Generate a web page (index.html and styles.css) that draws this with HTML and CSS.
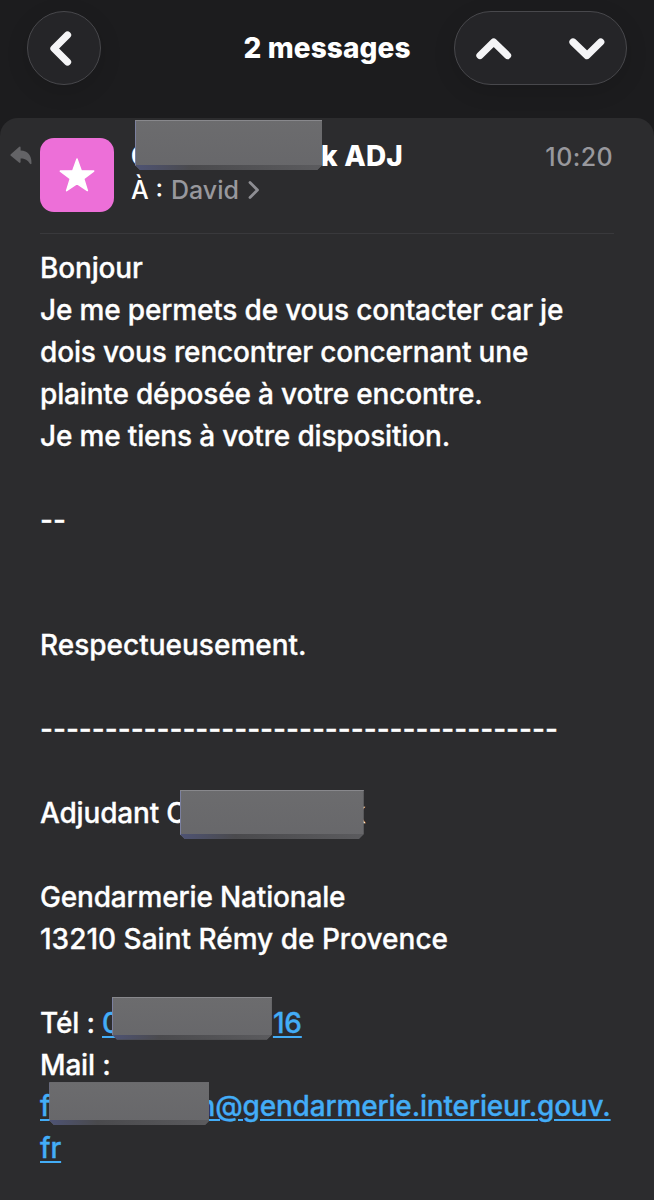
FILE: index.html
```html
<!DOCTYPE html>
<html lang="fr">
<head>
    <meta charset="UTF-8">
    <meta name="viewport" content="width=device-width, initial-scale=1.0">
    <title>2 messages</title>
    <link rel="stylesheet" href="styles.css">
</head>
<body>
    <header class="topbar">
        <button class="glass back" aria-label="Retour">
            <svg width="72" height="72" viewBox="0 0 72 72"><path d="M39.5 23 L26 36.5 L39.5 50"/></svg>
        </button>
        <h1 class="title">2 messages</h1>
        <div class="glass pager">
            <svg width="171" height="72" viewBox="0 0 171 72"><path d="M25 43.5 L38.7 30 L52.5 43.5 M118 30 L132 43.5 L145.7 30"/></svg>
        </div>
    </header>

    <main class="mail">
        <div class="sender">
            <svg class="reply" width="22" height="20" viewBox="0 0 22 20"><path d="M0.8 8.2 L9 0.9 Q10.6 -0.1 10.6 1.8 V4.6 C18 4.8 21.6 9.5 21.5 17.2 Q21.3 18.9 20 17.7 C17.6 13.8 15 12.4 10.6 12.4 V15.8 Q10.5 17.6 9 16.6 L0.8 9.8 Q0 9 0.8 8.2Z"/></svg>
            <div class="avatar">
                <svg width="38" height="36" viewBox="0 0 38 36"><path d="M19 2 L23.2 13.8 L35.7 14.1 L25.7 21.7 L29.4 33.6 L19 26.6 L8.6 33.6 L12.3 21.7 L2.3 14.1 L14.8 13.8Z"/></svg>
            </div>
            <div class="names">
                <div class="from">C<span class="mask mask-from"></span>k ADJ</div>
                <div class="to"><span class="to-label">À :</span> <span class="to-name">David</span>
                    <svg width="12" height="20" viewBox="0 0 12 20"><path d="M2 2.5 L9.5 10 L2 17.5"/></svg>
                </div>
            </div>
            <time class="time">10:20</time>
        </div>

        <div class="body">
            <p>Bonjour</p>
            <p>Je me permets de vous contacter car je</p>
            <p>dois vous rencontrer concernant une</p>
            <p>plainte déposée à votre encontre.</p>
            <p>Je me tiens à votre disposition.</p>
            <br>
            <p class="wide">--</p>
            <br>
            <br>
            <p class="wide">Respectueusement.</p>
            <br>
            <p class="wide">----------------------------------------</p>
            <br>
            <p>Adjudant C<span class="mask mask-name"></span>k</p>
            <br>
            <p>Gendarmerie Nationale</p>
            <p class="wide">13210 Saint Rémy de Provence</p>
            <br>
            <p>Tél : <a class="link">0<span class="mask mask-tel"></span>16</a></p>
            <p>Mail :</p>
            <p><a class="link">f<span class="mask mask-mail"></span>n@gendarmerie.interieur.gouv.</a></p>
            <p><a class="link">fr</a></p>
        </div>
    </main>
</body>
</html>
```
FILE: styles.css
```css
* {
    box-sizing: border-box;
}
body {
    margin: 0;
    height: 1200px;
    overflow: hidden;
    background: #1c1c1e;
    color: #fff;
    font-family: Inter, "Liberation Sans", sans-serif;
    display: flex;
    flex-direction: column;
}
h1, p {
    margin: 0;
}
.topbar {
    height: 118px;
    flex: none;
    display: flex;
    justify-content: space-between;
    padding: 11px 27px 0;
}
.glass {
    height: 74px;
    border: 1px solid #48484c;
    border-radius: 37px;
    background: #252528;
    box-shadow: 0 6px 22px rgba(0, 0, 0, 0.13);
    padding: 0;
}
.glass svg {
    display: block;
    fill: none;
    stroke: #f4f4f6;
    stroke-width: 7.3;
    stroke-linecap: round;
    stroke-linejoin: round;
}
.back {
    width: 74px;
}
.pager {
    width: 173px;
}
.title {
    font-size: 28px;
    font-weight: 800;
    line-height: 75px;
    letter-spacing: 0.1px;
    margin-left: 102px;
    width: 170px;
    white-space: nowrap;
}
.mail {
    flex: 1;
    background: #2c2c2e;
    border-radius: 18px 18px 0 0;
    padding: 0 40px;
}
.sender {
    height: 116px;
    display: flex;
    border-bottom: 1px solid #39393c;
    padding-top: 20px;
}
.reply {
    flex: none;
    margin: 8px 8px 0 -30px;
    fill: #636366;
}
.avatar {
    width: 74px;
    height: 74px;
    flex: none;
    border-radius: 14px;
    background: #ed6fd8;
    display: flex;
    align-items: center;
    justify-content: center;
}
.avatar svg {
    fill: #fff;
    stroke: #fff;
    stroke-width: 1.5;
    stroke-linejoin: round;
}
.names {
    flex: 1;
    padding-left: 17px;
}
.from {
    font-size: 28px;
    font-weight: 800;
    line-height: 36px;
    letter-spacing: 0.2px;
    white-space: nowrap;
}
.to {
    display: flex;
    align-items: center;
    gap: 8px;
    font-size: 25px;
    font-weight: 500;
    line-height: 32px;
}
.to-name {
    color: #98989d;
}
.to svg {
    margin-left: 1px;
    fill: none;
    stroke: #8e8e93;
    stroke-width: 2.8;
    stroke-linecap: round;
    stroke-linejoin: round;
}
.time {
    font-size: 25px;
    font-weight: 500;
    line-height: 38px;
    letter-spacing: 0.4px;
    margin-right: 1px;
    color: #98989d;
}
.body {
    padding: 14px 0 0;
    font-size: 28px;
    font-weight: 500;
    line-height: 41.92px;
    letter-spacing: -0.17px;
    white-space: nowrap;
    -webkit-text-stroke: 0.3px;
}
.wide {
    letter-spacing: 0;
}
.link {
    color: #43adf7;
    text-decoration: underline;
    text-decoration-thickness: 2px;
    text-underline-offset: 3px;
}
/* grey tape over the redacted parts */
.mask {
    position: relative;
    display: inline-block;
    height: 20px;
}
.mask::before {
    content: "";
    position: absolute;
    left: 0;
    right: 0;
    top: -13px;
    height: 43px;
    background: linear-gradient(#88888c 0 1px, transparent 1px), linear-gradient(90deg, #7b80a0 0 1px, transparent 1px), linear-gradient(90deg, #4e5374, #4a4a4d 30%, #5b5b5e) bottom / 100% 5px no-repeat, linear-gradient(#6c6c6e, #67676a);
    clip-path: polygon(0 0, 100% 0, 100% calc(100% - 5px), calc(100% - 5px) 100%, 5px 100%, 0 calc(100% - 5px));
}
.mask-from {
    width: 187px;
    margin-left: -17px;
    margin-right: -1px;
}
.mask-from::before {
    top: -26px;
    height: 50px;
}
.mask-name {
    width: 184px;
    margin-left: -7px;
    margin-right: -14px;
}
.mask-name::before {
    height: 49px;
}
.mask-tel {
    width: 160px;
    margin-left: -8px;
    margin-right: 1px;
}
.mask-tel::before {
    top: -16px;
}
.mask-mail {
    width: 160px;
    margin-left: -1px;
    margin-right: -11px;
}
.mask-mail::before {
    top: -14px;
}
```
